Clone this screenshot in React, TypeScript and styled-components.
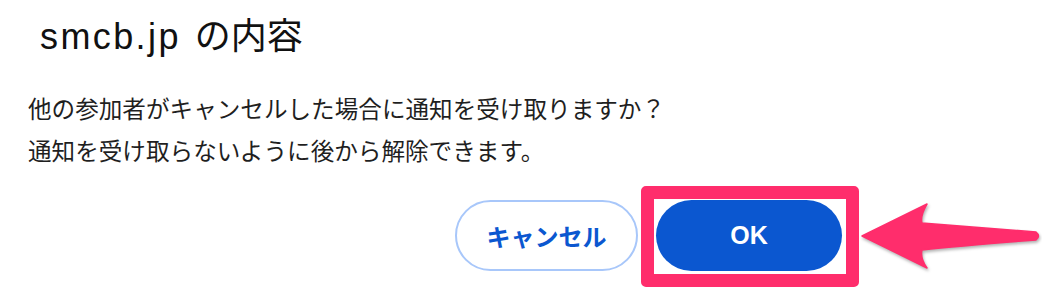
import React from 'react'
import styled, { createGlobalStyle } from 'styled-components'

const GlobalStyle = createGlobalStyle`
  html, body {
    margin: 0;
    padding: 0;
    background: #ffffff;
  }
  body {
    width: 1042px;
    height: 300px;
    overflow: hidden;
    font-family: "Liberation Sans", "Noto Sans CJK JP", sans-serif;
  }
`

const Dialog = styled.div`
  display: flex;
  flex-direction: column;
  padding: 13px 0 0 28px;
  width: 1042px;
  box-sizing: border-box;
`

const Title = styled.h1`
  margin: 0 0 26px 12px;
  font-size: 36px;
  line-height: 48px;
  font-weight: 400;
  color: #111111;
`

const Domain = styled.span`
  letter-spacing: 2.4px;
  margin-right: 4px;
`

const Message = styled.p`
  margin: 0;
  font-family: "Noto Sans CJK JP", sans-serif;
  font-size: 23.6px;
  line-height: 42px;
  color: #1f1f1f;
`

const ButtonRow = styled.div`
  display: flex;
  justify-content: flex-end;
  gap: 18px;
  margin-top: 29px;
  padding-right: 200px;
`

const Button = styled.button<{ primary?: boolean }>`
  height: 71px;
  width: ${(p) => (p.primary ? '186px' : '183px')};
  border-radius: 36px;
  box-sizing: border-box;
  border: ${(p) => (p.primary ? 'none' : '2px solid #a8c7fa')};
  background: ${(p) => (p.primary ? '#0b57d0' : '#ffffff')};
  color: ${(p) => (p.primary ? '#ffffff' : '#0b57d0')};
  font-family: "Liberation Sans", "Noto Sans CJK JP", sans-serif;
  font-size: ${(p) => (p.primary ? '25px' : '24px')};
  font-weight: 700;
  display: flex;
  align-items: center;
  justify-content: center;
  padding: 0;
  cursor: pointer;
`

const OkWrap = styled.div`
  position: relative;
  display: flex;
`

const Highlight = styled.div`
  position: absolute;
  top: -14px;
  left: -15px;
  right: -17px;
  bottom: -16px;
  border: 13px solid #ff2d6c;
  border-radius: 5px;
  pointer-events: none;
`

const Arrow = styled.svg`
  position: absolute;
  left: calc(100% + 16px);
  top: -10px;
  overflow: visible;
  filter: drop-shadow(1px 2px 1.5px rgba(0, 0, 0, 0.3));
`

export default function App() {
  return (
    <>
      <GlobalStyle />
      <Dialog>
        <Title>
          <Domain>smcb.jp</Domain> の内容
        </Title>
        <Message>
          他の参加者がキャンセルした場合に通知を受け取りますか？
          <br />
          通知を受け取らないように後から解除できます。
        </Message>
        <ButtonRow>
          <Button>キャンセル</Button>
          <OkWrap>
            <Button primary>OK</Button>
            <Highlight />
            <Arrow width="186" height="90" viewBox="0 0 186 90">
              {/* tip at x=4,y=46 (page 862,236) */}
              <path
                d="M4 46 L69 14 Q62 26 64 33 Q100 36 178 42 Q183 46 178 50 Q100 56 64 60 Q62 68 69 78 Z"
                fill="#ff2d6c"
                strokeLinejoin="round"
                stroke="#ff2d6c"
                strokeWidth="1.5"
              />
            </Arrow>
          </OkWrap>
        </ButtonRow>
      </Dialog>
    </>
  )
}
